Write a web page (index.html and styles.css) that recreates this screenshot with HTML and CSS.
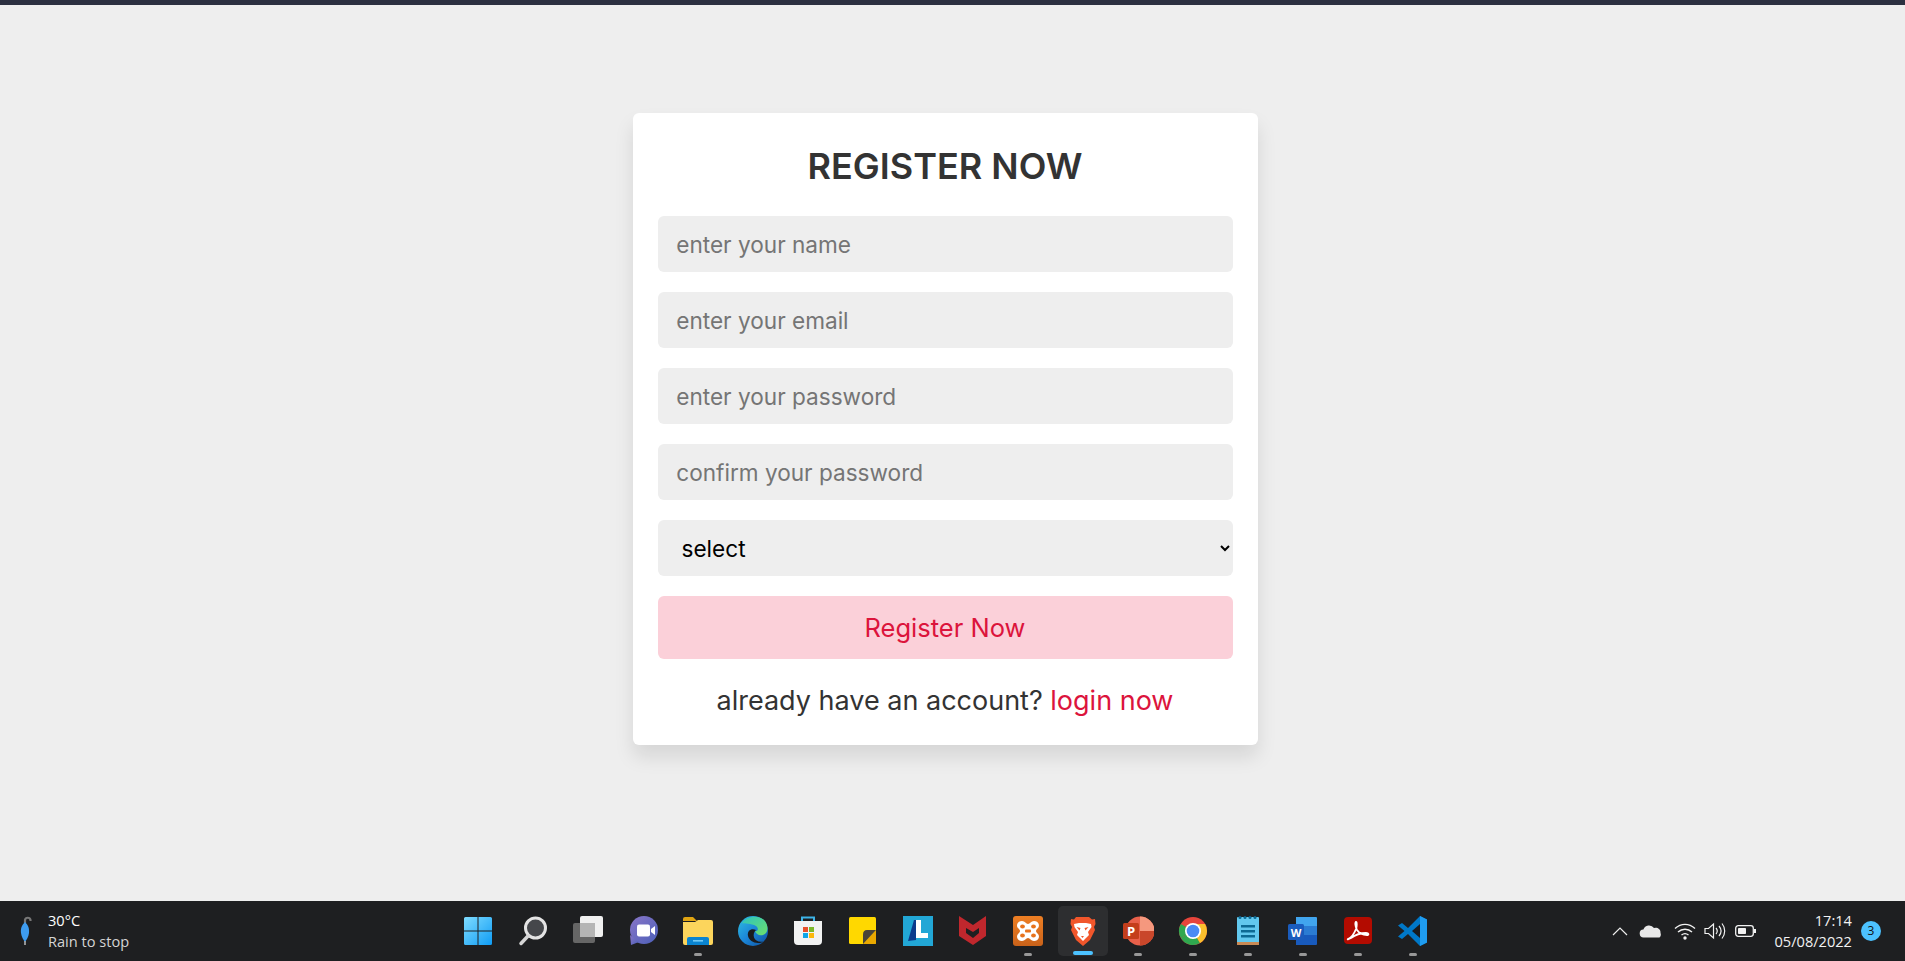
FILE: index.html
```html
<!DOCTYPE html>
<html lang="en">
<head>
<meta charset="utf-8">
<title>Register</title>
<link rel="stylesheet" href="styles.css">
</head>
<body>
<div class="topbar"></div>
<main class="page">
  <form class="card">
    <h3 class="title">REGISTER NOW</h3>
    <input class="field" type="text" placeholder="enter your name">
    <input class="field" type="email" placeholder="enter your email">
    <input class="field" type="password" placeholder="enter your password">
    <input class="field" type="password" placeholder="confirm your password">
    <select class="field select"><option>select</option></select>
    <button class="submit" type="button">Register Now</button>
    <p class="foot">already have an account? <a class="link" href="#">login now</a></p>
  </form>
</main>
<footer class="taskbar">
  <div class="weather">
    <svg class="umbrella" width="14" height="32" viewBox="0 0 14 32"><path d="M7 8V5a2.800 2.800 0 0 1 5.500 0v1" fill="none" stroke="#777" stroke-width="2.200"/><path d="M7 7c3 3 4.500 6 4 11-.4 4-2.600 7-4 9-1.400-2-3.600-5-4-9C2.500 13 4 10 7 7z" fill="#3d9cf0"/><path d="M7 26v4" stroke="#bbb" stroke-width="1.500"/></svg>
    <div class="weather-text"><span class="temp">30°C</span><span class="cond">Rain to stop</span></div>
  </div>
  <div class="apps">
    <div class="app">
      <svg width="32" height="32" viewBox="0 0 32 32"><defs><linearGradient id="win" x1="0" y1="0" x2="1" y2="1"><stop offset="0" stop-color="#7fdcff"/><stop offset="1" stop-color="#0f9cf5"/></linearGradient></defs><path d="M2 3.500A1.500 1.500 0 0 1 3.500 2h12v13.500H2zM16.500 2h12A1.500 1.500 0 0 1 30 3.500v12H16.500zM2 16.500h13.500V30h-12A1.500 1.500 0 0 1 2 28.500zM16.500 16.500H30v12a1.500 1.500 0 0 1-1.500 1.500h-12z" fill="url(#win)"/></svg>
    </div>
    <div class="app">
      <svg width="32" height="32" viewBox="0 0 32 32"><circle cx="18.500" cy="13" r="10" fill="#45474b" stroke="#e4e4e4" stroke-width="3"/><path d="M11 21l-7 7.500" stroke="#d5d5d5" stroke-width="3.500" stroke-linecap="round"/></svg>
    </div>
    <div class="app">
      <svg width="32" height="32" viewBox="0 0 32 32"><rect x="1" y="8" width="22" height="20" rx="2" fill="#666"/><rect x="8" y="1" width="23" height="21" rx="2" fill="#f0f0f0"/><rect x="8" y="8" width="15" height="14" fill="#b5b5b5"/></svg>
    </div>
    <div class="app">
      <svg width="32" height="32" viewBox="0 0 32 32"><defs><linearGradient id="chat" x1="0" y1="0" x2="1" y2="1"><stop offset="0" stop-color="#8a76c8"/><stop offset="1" stop-color="#4b5fb8"/></linearGradient></defs><circle cx="17" cy="15" r="14" fill="url(#chat)"/><path d="M3 20l1 10 8-3z" fill="url(#chat)"/><rect x="10" y="9.500" width="13" height="12" rx="2" fill="#fff"/><path d="M24 14l4-3v9l-4-3z" fill="#fff"/></svg>
    </div>
    <div class="app on">
      <svg width="32" height="32" viewBox="0 0 32 32"><path d="M1 4a2 2 0 0 1 2-2h8l4 4H1z" fill="#e0a412"/><path d="M1 7h12l3-2h13a2 2 0 0 1 2 2v21a2 2 0 0 1-2 2H3a2 2 0 0 1-2-2z" fill="#fcd55c"/><path d="M5 24a2 2 0 0 1 2-2h18a2 2 0 0 1 2 2v6H5z" fill="#0a84d0"/><rect x="11" y="25" width="10" height="1.600" fill="#6fc8f5"/></svg>
    </div>
    <div class="app">
      <svg width="32" height="32" viewBox="0 0 32 32"><defs><linearGradient id="edge" x1="0" y1="0" x2="1" y2="1"><stop offset="0" stop-color="#2fbfe0"/><stop offset=".5" stop-color="#1b86d8"/><stop offset="1" stop-color="#0d4f9e"/></linearGradient><linearGradient id="edge2" x1="0" y1="0" x2="1" y2="1"><stop offset="0" stop-color="#2cc4c0"/><stop offset="1" stop-color="#6ee06a"/></linearGradient></defs><circle cx="16" cy="16" r="15" fill="url(#edge)"/><path d="M5 8C9 1 22-1 28 6c4 5 3 13-2 14-4 1-7-1-8-4 3 1 4-3 1-5-5-3-11-2-14-3z" fill="url(#edge2)"/><path d="M19 15c-5-2-9 1-8 6 1 4 5 7 10 7 2 0 4-.500 5-1.500-4 1-8-1-9-4-.800-3 0-6 2-7.500z" fill="#1a1b1d"/></svg>
    </div>
    <div class="app">
      <svg width="32" height="32" viewBox="0 0 32 32"><path d="M10 7V2.500h12V7" fill="none" stroke="#3db4e8" stroke-width="2"/><path d="M2 6h28v20a4 4 0 0 1-4 4H6a4 4 0 0 1-4-4z" fill="#f2f2f2"/><rect x="11" y="12" width="5" height="5" fill="#e8502a"/><rect x="17" y="12" width="5" height="5" fill="#7cb82a"/><rect x="11" y="18" width="5" height="5" fill="#0ea5e8"/><rect x="17" y="18" width="5" height="5" fill="#fcb80c"/></svg>
    </div>
    <div class="app">
      <svg width="32" height="32" viewBox="0 0 32 32"><rect x="2" y="2" width="27" height="27" rx="1.500" fill="#ffd800"/><path d="M29 15v13a1 1 0 0 1-1 1H16z" fill="#e9a800"/><path d="M29 15L16 29v-9.500q0-4.500 4-4.500z" fill="#4a4438"/></svg>
    </div>
    <div class="app">
      <svg width="32" height="32" viewBox="0 0 32 32"><rect x="1" y="1" width="30" height="30" fill="#22a7d6"/><path d="M12 5h2v20l-8 1z" fill="#0b3a8c"/><path d="M14 5h5v13h7v5H14z" fill="#fff"/></svg>
    </div>
    <div class="app">
      <svg width="32" height="32" viewBox="0 0 32 32"><path d="M2 1l14 9 13-9v20l-13 9-14-9zM9 13v5l7 5 6-5v-5l-6 4z" fill="#c0272d" fill-rule="evenodd"/></svg>
    </div>
    <div class="app on">
      <svg width="32" height="32" viewBox="0 0 32 32"><defs><linearGradient id="xampp" x1="0" y1="0" x2="0" y2="1"><stop offset="0" stop-color="#ee7f24"/><stop offset="1" stop-color="#c9621a"/></linearGradient></defs><rect x="1" y="1" width="30" height="30" rx="3" fill="url(#xampp)"/><path d="M10 6c3 0 4 3 6 3s3-3 6-3c5 0 6 5 4 7-1 1-2 2-2 3s1 2 2 3c2 2 1 7-4 7-3 0-4-3-6-3s-3 3-6 3c-5 0-6-5-4-7 1-1 2-2 2-3s-1-2-2-3c-2-2-1-7 4-7z" fill="#fff"/><ellipse cx="10.500" cy="11.500" rx="2.400" ry="2" fill="#e8731c"/><ellipse cx="21.500" cy="11.500" rx="2.400" ry="2" fill="#e8731c"/><ellipse cx="10.500" cy="20.500" rx="2.400" ry="2" fill="#e8731c"/><ellipse cx="21.500" cy="20.500" rx="2.400" ry="2" fill="#e8731c"/><rect x="13" y="14.500" width="6" height="3" rx="1" fill="#e8731c"/></svg>
    </div>
    <div class="app active">
      <svg width="32" height="32" viewBox="0 0 32 32"><path d="M9 2h13l3 2.500L28 4l.5 5L27 12l1 3-5 10-7 6-7-6-5-10 1-3-1.500-3L4 4l3 .5z" fill="#f1562b"/><path d="M7 9l5-1h7l5 1 .5 3-3.500 5 1 3-3 3-3 3-3-3-3-3 1-3-3.500-5z" fill="#fff"/><path d="M9.500 12l4 1-1 2.500zM21.500 12l-4 1 1 2.500zM14 21h3l-1.500 2z" fill="#f1562b"/></svg>
    </div>
    <div class="app on">
      <svg width="32" height="32" viewBox="0 0 32 32"><circle cx="18" cy="16" r="14.500" fill="#e8604a"/><path d="M18 16V1.500A14.500 14.500 0 0 1 32.500 16z" fill="#f5987e"/><path d="M18 16h14.500A14.500 14.500 0 0 1 18 30.500z" fill="#c9472b"/><rect x="1" y="8" width="16" height="16" rx="1.500" fill="#c43e1c"/><text class="ppt-letter" x="9" y="21" text-anchor="middle">P</text></svg>
    </div>
    <div class="app on">
      <svg width="32" height="32" viewBox="0 0 32 32"><circle cx="16" cy="16" r="14" fill="#e8453c"/><path d="M16 16L3.900 23A14 14 0 0 1 3.900 9z" fill="#2fa84f"/><path d="M3.900 23L16 16l7 12.100A14 14 0 0 1 3.900 23z" fill="#2fa84f"/><path d="M16 9h12.100A14 14 0 0 1 23 28.100L16 16z" fill="#fbc02d"/><circle cx="16" cy="16" r="8" fill="#fff"/><circle cx="16" cy="16" r="6.300" fill="#4a8af4"/></svg>
    </div>
    <div class="app on">
      <svg width="32" height="32" viewBox="0 0 32 32"><rect x="5" y="2" width="22" height="28" rx="1" fill="#62c8ee"/><rect x="5" y="27" width="22" height="3" fill="#c98a55"/><g fill="#0d6a94"><circle cx="8" cy="2.500" r="1.500"/><circle cx="13" cy="2.500" r="1.500"/><circle cx="18" cy="2.500" r="1.500"/><circle cx="23" cy="2.500" r="1.500"/><rect x="9" y="10" width="14" height="2.500"/><rect x="9" y="15" width="14" height="2.500"/><rect x="9" y="20" width="14" height="2.500"/></g></svg>
    </div>
    <div class="app on">
      <svg width="32" height="32" viewBox="0 0 32 32"><path d="M9 2h20a1 1 0 0 1 1 1v8H9z" fill="#41a5ee"/><path d="M9 11h21v9H9z" fill="#2b7cd3"/><path d="M9 20h21v9a1 1 0 0 1-1 1H9z" fill="#185abd"/><rect x="1" y="9" width="16" height="16" rx="1.500" fill="#1a5cbd"/><text class="word-letter" x="9" y="22" text-anchor="middle">W</text></svg>
    </div>
    <div class="app on">
      <svg width="32" height="32" viewBox="0 0 32 32"><rect x="2" y="2" width="28" height="27" rx="4" fill="#b30b00"/><path d="M6 24c3-1 6-5 8-10 1-3 1-7 0-7s-1 4 1 8c2 3 5 5 10 5 2 0 2-2-1-2-5 0-11 2-15 5-2 1-4 2-3 1z" fill="none" stroke="#fff" stroke-width="1.800" stroke-linejoin="round"/></svg>
    </div>
    <div class="app on">
      <svg width="32" height="32" viewBox="0 0 32 32"><path d="M23 1l7 3.500v23L23 31 11 19l-6 5-4-2.500L7.500 16 1 10.500 5 8l6 5z" fill="#0078c8"/><path d="M23 1l7 3.500v23L23 31z" fill="#1f9cf0"/><path d="M23 9l-8 7 8 7z" fill="#1a1b1d"/></svg>
    </div>
  </div>
  <div class="tray">
    <svg class="tray-icon chevron" width="18" height="12" viewBox="0 0 18 12"><path d="M2 10l7-7 7 7" fill="none" stroke="#eee" stroke-width="1.200"/></svg>
    <svg class="tray-icon cloud" width="22" height="14" viewBox="0 0 22 14"><path d="M5 13.500a4 4 0 0 1-.600-8A6 6 0 0 1 15 4a4.800 4.800 0 0 1 6.500 5 4 4 0 0 1-1 4.500z" fill="#e8e8e8"/></svg>
    <svg class="tray-icon wifi" width="22" height="18" viewBox="0 0 22 18"><g fill="none" stroke="#f2f2f2" stroke-width="1.400"><path d="M1 6.500c6-5.500 14-5.500 20 0"/><path d="M4 10c4-3.600 10-3.600 14 0"/><path d="M7.500 13c2-1.600 5-1.600 7 0"/></g><circle cx="11" cy="16" r="1.700" fill="#f2f2f2"/></svg>
    <svg class="tray-icon volume" width="22" height="18" viewBox="0 0 22 18"><g fill="none" stroke="#f2f2f2" stroke-width="1.200"><path d="M1 6.500h3.500L9.500 2v14l-5-4.500H1z"/><path d="M12 6c1.500 1.800 1.500 4.200 0 6"/><path d="M15 4c2.500 3 2.500 7 0 10"/><path d="M18 1.500c3.600 4.500 3.600 10.500 0 15"/></g></svg>
    <svg class="tray-icon battery" width="22" height="12" viewBox="0 0 22 12"><rect x=".7" y=".7" width="17.600" height="10.600" rx="2.500" fill="none" stroke="#f2f2f2" stroke-width="1.300"/><rect x="3" y="3" width="8" height="6" rx=".8" fill="#f2f2f2"/><rect x="19" y="4" width="2" height="4" fill="#f2f2f2"/></svg>
    <div class="clock"><span>17:14</span><span>05/08/2022</span></div>
    <span class="badge">3</span>
  </div>
</footer>
</body>
</html>
```
FILE: styles.css
```css
* { box-sizing: border-box; margin: 0; padding: 0; }
html, body { height: 100%; }
body {
  display: flex;
  flex-direction: column;
  height: 961px;
  overflow: hidden;
  background: #eee;
  font-family: Inter, "Noto Sans", sans-serif;
}
.topbar { height: 5px; background: #2c3040; flex: none; }
.page {
  flex: 1;
  display: flex;
  justify-content: center;
  align-items: flex-start;
  padding: 108px 15px 0 0;
}
.card {
  width: 625px;
  height: 632px;
  padding: 21px 25px 0;
  display: flex;
  flex-direction: column;
  background: #fff;
  border-radius: 6px;
  box-shadow: 0 12px 19px rgba(0, 0, 0, .1);
  text-align: center;
}
.title {
  height: 82px;
  line-height: 64px;
  font-size: 36px;
  font-weight: 600;
  color: #333;
}
.field {
  flex: none;
  display: block;
  width: 100%;
  height: 56px;
  margin-bottom: 20px;
  padding: 0 18.75px;
  border: 0;
  border-radius: 6px;
  outline: 0;
  background: #eee;
  color: #000;
  font: 400 22.6px Inter, "Noto Sans", sans-serif;
}
.field::placeholder { color: #757575; opacity: 1; }
.select { padding: 0 7px 0 20px; }
.submit {
  flex: none;
  width: 100%;
  height: 63px;
  border: 0;
  border-radius: 6px;
  background: #fbd0d9;
  color: #dc143c;
  font: 400 25.5px Inter, "Noto Sans", sans-serif;
}
.foot {
  margin-top: 21px;
  line-height: 42px;
  font-size: 27px;
  color: #333;
}
.link { color: #dc143c; text-decoration: none; }

.taskbar {
  flex: none;
  display: flex;
  align-items: center;
  height: 60px;
  background: #1e1f21;
  color: #fff;
  font-family: "Open Sans", "Noto Sans", sans-serif;
}
.weather {
  flex: none;
  display: flex;
  align-items: center;
  width: 450px;
  padding-left: 18px;
}
.umbrella { margin-right: 16px; }
.weather-text { display: flex; flex-direction: column; font-size: 14.6px; line-height: 21px; }
.temp { color: #fff; }
.cond { color: #d4d4d4; }
.apps { flex: none; display: flex; }
.app {
  position: relative;
  width: 55px;
  height: 50px;
  display: flex;
  align-items: center;
  justify-content: center;
  border-radius: 5px;
}
.app.on::after,
.app.active::after {
  content: "";
  position: absolute;
  left: 23.5px;
  bottom: 0;
  width: 8px;
  height: 3px;
  border-radius: 2px;
  background: #989898;
}
.app.active { width: 50px; margin: 0 2.5px; background: #2d2e30; }
.app.active::after { left: 15px; width: 20px; height: 4px; bottom: 1px; background: #4cc2ff; }
.ppt-letter { font: 700 13px "Open Sans", sans-serif; fill: #fff; }
.word-letter { font: 700 11px "Open Sans", sans-serif; fill: #fff; }
.tray { flex: 1; display: flex; align-items: center; padding-left: 170.5px; }
.tray-icon { flex: none; }
.cloud { margin-left: 10px; }
.wifi { margin-left: 13px; }
.volume { margin-left: 8px; }
.battery { margin-left: 9px; }
.clock {
  margin-left: 18px;
  display: flex;
  flex-direction: column;
  align-items: flex-end;
  font-size: 14.6px;
  line-height: 21px;
  color: #f2f2f2;
}
.badge {
  margin-left: 9px;
  width: 20px;
  height: 20px;
  border-radius: 50%;
  background: #4cc2ff;
  color: #111;
  font-size: 12px;
  line-height: 20px;
  text-align: center;
}
```
